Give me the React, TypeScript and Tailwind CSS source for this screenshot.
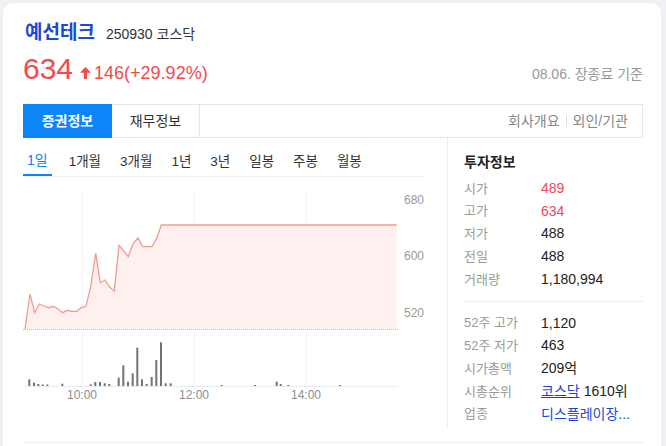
const linePts: [number, number][] = [
  [2, 152], [7, 117], [11.7, 135.7], [16.3, 127], [21, 129], [25.7, 130.7], [30.3, 129.3],
  [35, 132], [39.7, 135.7], [44.3, 133.3], [49, 134.3], [53.7, 134.3], [58.3, 130.7],
  [63, 129.3], [67.7, 109.7], [72.7, 76.3], [77.3, 105.7], [82, 103], [86.7, 110],
  [91.3, 114], [96, 68.3], [100.7, 74], [105.3, 79.7], [110.3, 66.3], [115, 61],
  [119.7, 69.7], [124.3, 69.7], [129, 69.7], [133.7, 61.3], [138.3, 48], [373.7, 48],
];

const volumes: [number, number][] = [
  [6.3, 6.7], [11, 3.3], [15.3, 2], [19.7, 1.5], [24.3, 1.5], [39.3, 2.3], [67.7, 1.7],
  [72.3, 4], [77, 4], [81.7, 2.7], [86.3, 2], [95.7, 8.3], [100.3, 20.7], [105, 4.3],
  [109.7, 12.7], [114.3, 38.3], [119, 6.7], [123.7, 2], [128.7, 9], [133.3, 26],
  [138, 43.7], [142.7, 2.7], [147.7, 2.7], [198.7, 1], [232, 1], [253.7, 4.3],
  [257.7, 2], [265.3, 1], [317, 1],
];

const periods = ["1일", "1개월", "3개월", "1년", "3년", "일봉", "주봉", "월봉"];

const info = [
  { label: "시가", value: "489", red: true },
  { label: "고가", value: "634", red: true },
  { label: "저가", value: "488" },
  { label: "전일", value: "488" },
  { label: "거래량", value: "1,180,994" },
];

function Chart() {
  const line = linePts.map(([x, y]) => `${x},${y}`).join(" ");
  const area = `2,152 ${line} 373.7,152`;
  return (
    <svg width="401" height="228" className="block">
      {[59, 171, 283].map((x) => (
        <line key={x} x1={x} x2={x} y1={15} y2={209} stroke="#f3f4f6" strokeWidth="1" />
      ))}
      <polygon points={area} fill="#fff0f0" />
      <polyline points={line} fill="none" stroke="#f39a90" strokeWidth="1.3" />
      <line x1={0} x2={375} y1={152.5} y2={152.5} stroke="#b9b9b9" strokeWidth="1" strokeDasharray="1 1" />
      {volumes.map(([x, h]) => (
        <rect key={x} x={x - 1} y={209 - h} width="2" height={h} fill="#6f7672" />
      ))}
      <line x1={0} x2={375} y1={209.5} y2={209.5} stroke="#e8ecf5" strokeWidth="1" />
      <g fill="#9a9a9a" fontSize="12" textAnchor="end">
        <text x="401" y="26.5">680</text>
        <text x="401" y="83">600</text>
        <text x="401" y="140">520</text>
      </g>
      <g fill="#8e8e8e" fontSize="12" textAnchor="middle">
        <text x="59" y="222">10:00</text>
        <text x="171" y="222">12:00</text>
        <text x="283" y="222">14:00</text>
      </g>
    </svg>
  );
}

function UpArrow() {
  return (
    <svg width="11" height="12" viewBox="0 0 11 12" className="-mb-px ml-[7px] self-baseline">
      <polygon points="5.5,0 11,5.8 0,5.8" fill="#f24a4d" />
      <rect x="4" y="5" width="3" height="7" fill="#f24a4d" />
    </svg>
  );
}

function Row({ label, children }: { label: string; children: React.ReactNode }) {
  return (
    <div className="flex h-[22.75px] items-center">
      <span className="w-[77px] text-[13px] text-[#9a9a9a]">{label}</span>
      {children}
    </div>
  );
}

export default function App() {
  return (
    <div className="h-[446px] overflow-hidden bg-[#f0f1f5] pl-[3px] pt-[3px] font-['Liberation_Sans','Noto_Sans_CJK_KR',sans-serif] text-[#222]">
      <div className="h-[480px] w-[658px] rounded-t-[10px] bg-white pl-5 pr-[18px] pt-[15px]">
        {/* name */}
        <div className="flex h-[30px] items-baseline gap-[11px] leading-[30px]">
          <h1 className="ml-[2px] text-[19px] font-bold text-[#1b49d2]">예선테크</h1>
          <span className="text-[14px] text-[#333]">250930 코스닥</span>
        </div>

        {/* price */}
        <div className="mt-[3px] flex h-[36px] items-baseline leading-[36px]">
          <span className="text-[30px] text-[#f24a4d]">634</span>
          <UpArrow />
          <span className="ml-[3px] text-[18px] text-[#f24a4d]">146(+29.92%)</span>
          <span className="ml-auto text-[14px] text-[#999]">08.06. 장종료 기준</span>
        </div>

        {/* tabs */}
        <div className="mt-[17px] flex h-[34px] items-center border border-[#e3e5ea] text-[14px]">
          <div className="-my-px -ml-px flex h-[34px] w-[89px] items-center justify-center bg-[#0b85f8] font-bold text-white">
            증권정보
          </div>
          <div className="flex h-full w-[88px] items-center justify-center border-r border-[#e3e5ea] text-[#333]">
            재무정보
          </div>
          <div className="ml-auto flex items-center pr-[14px] text-[#888]">
            <span>회사개요</span>
            <span className="mx-[6px] h-[12px] w-px bg-[#ddd]" />
            <span>외인/기관</span>
          </div>
        </div>

        {/* body */}
        <div className="flex h-[305px] items-start border-b border-[#eceef2]">
          <div className="h-[291px] w-[425px] border-r border-[#eceef2]">
            <div className="flex h-[39px] w-[401px] items-end gap-[11px] border-b border-[#eef0f4]">
              {periods.map((p, i) => (
                <div
                  key={p}
                  className={
                    i === 0
                      ? "border-b-2 border-[#0b85f8] px-1 pb-[4px] text-[14px] leading-[20px] text-[#0b85f8]"
                      : i === 1
                        ? "ml-[2px] px-1 pb-[4px] text-[13.5px] leading-[20px] text-[#333]"
                        : "px-1 pb-[4px] text-[13.5px] leading-[20px] text-[#333]"
                  }
                >
                  {p}
                </div>
              ))}
            </div>
            <Chart />
          </div>

          <div className="flex-1 pl-4 pt-[14px] text-[14px]">
            <div className="h-[20px] font-bold leading-[20px] text-[#222]">투자정보</div>
            <div className="mt-[5px]">
              {info.map((r) => (
                <Row key={r.label} label={r.label}>
                  <span className={r.red ? "text-[#f0475a]" : "text-[#222]"}>{r.value}</span>
                </Row>
              ))}
            </div>
            <div className="my-[10px] h-px bg-[#eceef2]" />
            <Row label="52주 고가">
              <span>1,120</span>
            </Row>
            <Row label="52주 저가">
              <span>463</span>
            </Row>
            <Row label="시가총액">
              <span>209억</span>
            </Row>
            <Row label="시총순위">
              <span className="text-[#1b3fd0] underline">코스닥</span>
              <span className="ml-1">1610위</span>
            </Row>
            <Row label="업종">
              <span className="text-[#1b49d2]">디스플레이장...</span>
            </Row>
          </div>
        </div>
      </div>
    </div>
  );
}
